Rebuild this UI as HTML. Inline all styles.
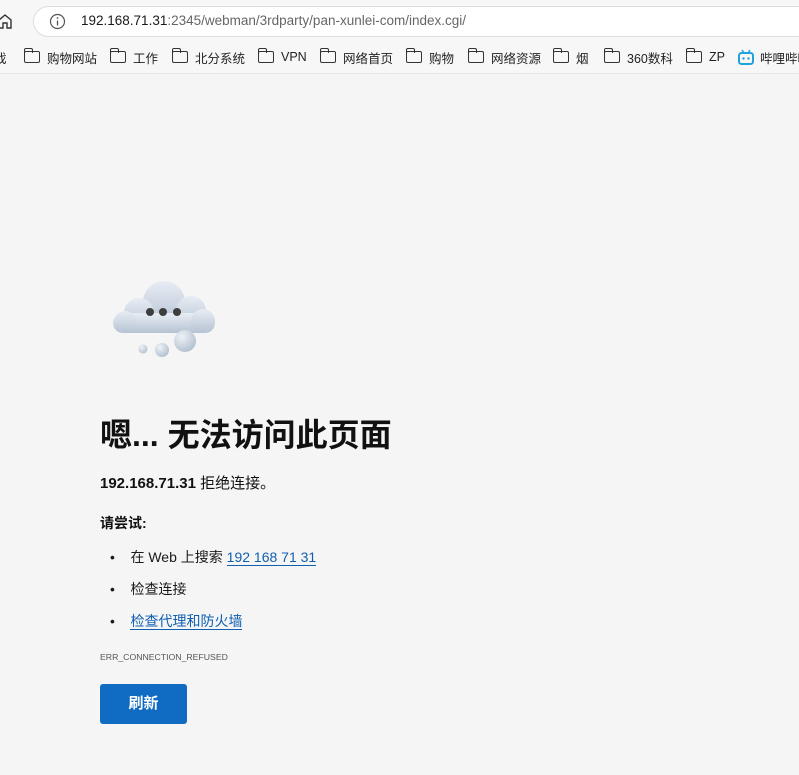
<!DOCTYPE html>
<html><head><meta charset="utf-8"><style>
*{margin:0;padding:0;box-sizing:border-box}
body{width:799px;height:775px;overflow:hidden;background:#f5f5f5;font-family:"Liberation Sans","Noto Sans CJK SC",sans-serif;color:#1a1a1a;position:relative}
.top{position:absolute;left:0;top:0;width:799px;height:42px;background:#f7f7f7}
.addr{position:absolute;left:33px;top:6px;width:800px;height:31px;background:#fff;border:1px solid #ddd;border-radius:16px}
.url{position:absolute;left:81px;top:13px;font-size:13.5px;color:#666;white-space:nowrap}
.url b{font-weight:normal;color:#1a1a1a}
.bar{position:absolute;top:42px;left:0;width:799px;height:32px;background:#f7f7f7;border-bottom:1px solid #e6e6e6}
.b{position:absolute;top:48px;font-size:12.5px;color:#222;white-space:nowrap;display:flex;align-items:center;height:18px}
.f{display:inline-block;width:16px;height:12px;border:1.3px solid #333;border-radius:2px;margin-right:7px;position:relative}
.f:before{content:"";position:absolute;left:-1px;top:-4px;width:7px;height:4px;border:1.3px solid #333;border-bottom:none;border-radius:2px 2px 0 0}
.abs{position:absolute;white-space:nowrap}
a{color:#0f5fb0;text-decoration:none;border-bottom:1px solid #0f5fb0}
</style></head><body>
<div class="top"></div>
<div class="addr"></div>
<svg class="abs" style="left:-3px;top:12px" width="16" height="18" viewBox="0 0 16 18"><path d="M2 8 L8 3 L14 8 V16 H10 V11 H6 V16 H2 Z" fill="none" stroke="#333" stroke-width="1.4"/></svg>
<svg class="abs" style="left:49px;top:13px" width="17" height="17" viewBox="0 0 17 17"><circle cx="8.5" cy="8.5" r="7" fill="none" stroke="#555" stroke-width="1.2"/><line x1="8.5" y1="7.5" x2="8.5" y2="12.5" stroke="#555" stroke-width="1.3"/><circle cx="8.5" cy="5" r=".9" fill="#555"/></svg>
<div class="url"><b>192.168.71.31</b>:2345/webman/3rdparty/pan-xunlei-com/index.cgi/</div>
<div class="bar"></div>
<div class="b" style="left:-6px">戏</div>
<div class="b" style="left:24px"><span class="f"></span>购物网站</div>
<div class="b" style="left:110px"><span class="f"></span>工作</div>
<div class="b" style="left:172px"><span class="f"></span>北分系统</div>
<div class="b" style="left:258px"><span class="f"></span>VPN</div>
<div class="b" style="left:320px"><span class="f"></span>网络首页</div>
<div class="b" style="left:406px"><span class="f"></span>购物</div>
<div class="b" style="left:468px"><span class="f"></span>网络资源</div>
<div class="b" style="left:553px"><span class="f"></span>烟</div>
<div class="b" style="left:604px"><span class="f"></span>360数科</div>
<div class="b" style="left:686px"><span class="f"></span>ZP</div>
<div class="b" style="left:738px"><svg width="16" height="16" viewBox="0 0 16 16" style="margin-right:6px"><path d="M4 1 L6 4 M12 1 L10 4" stroke="#1ea3dc" stroke-width="1.5"/><rect x="1" y="4" width="14" height="11" rx="2.5" fill="none" stroke="#1ea3dc" stroke-width="2"/><circle cx="5.5" cy="9.5" r="1.2" fill="#1ea3dc"/><circle cx="10.5" cy="9.5" r="1.2" fill="#1ea3dc"/></svg>哔哩哔哩</div>

<svg class="abs" style="left:105px;top:275px" width="120" height="90" viewBox="0 0 120 90">
<defs><linearGradient id="g" x1="0" y1="0" x2="0" y2="1"><stop offset="0" stop-color="#e8edf4"/><stop offset="1" stop-color="#b6c3d3"/></linearGradient>
<radialGradient id="r" cx=".35" cy=".3" r=".8"><stop offset="0" stop-color="#eef2f7"/><stop offset="1" stop-color="#aebccc"/></radialGradient></defs>
<g fill="url(#g)">
<circle cx="59" cy="27" r="21"/>
<circle cx="34" cy="38" r="15"/>
<circle cx="86" cy="36" r="15"/>
<rect x="8" y="38" width="102" height="20" rx="10"/>
<circle cx="20" cy="47" r="11"/>
<circle cx="98" cy="46" r="12"/>
</g>
<circle cx="45" cy="37" r="4" fill="#3d3d3d"/><circle cx="58" cy="37" r="4" fill="#3d3d3d"/><circle cx="72" cy="37" r="4" fill="#3d3d3d"/>
<circle cx="38" cy="74" r="4.5" fill="url(#r)"/><circle cx="57" cy="75" r="7" fill="url(#r)"/><circle cx="80" cy="66" r="11" fill="url(#r)"/>
</svg>

<div class="abs" style="left:100px;top:410px;font-size:32px;font-weight:bold;color:#111">嗯... 无法访问此页面</div>
<div class="abs" style="left:100px;top:472px;font-size:15px;color:#111"><b>192.168.71.31</b> 拒绝连接。</div>
<div class="abs" style="left:100px;top:513px;font-size:14px;font-weight:bold;color:#111">请尝试:</div>
<div class="abs" style="left:110px;top:547px;font-size:14px">•&nbsp;&nbsp;&nbsp;&nbsp;在 Web 上搜索 <a>192 168 71 31</a></div>
<div class="abs" style="left:110px;top:579px;font-size:14px">•&nbsp;&nbsp;&nbsp;&nbsp;检查连接</div>
<div class="abs" style="left:110px;top:611px;font-size:14px">•&nbsp;&nbsp;&nbsp;&nbsp;<a>检查代理和防火墙</a></div>
<div class="abs" style="left:100px;top:652px;font-size:8.7px;color:#555">ERR_CONNECTION_REFUSED</div>
<div class="abs" style="left:100px;top:684px;width:87px;height:40px;background:#0f6cc2;border-radius:3px;color:#fff;font-size:15px;font-weight:bold;text-align:center;line-height:40px">刷新</div>
</body></html>
